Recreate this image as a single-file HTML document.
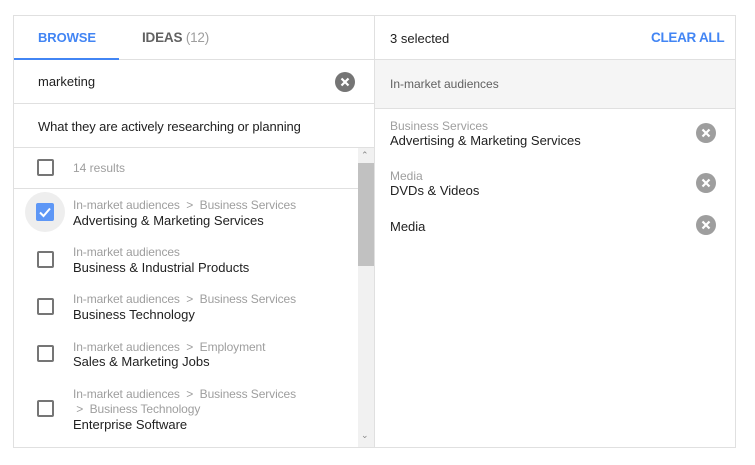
<!DOCTYPE html>
<html><head><style>
*{margin:0;padding:0;box-sizing:border-box}
body{width:755px;height:465px;background:#fff;font-family:"Liberation Sans",Roboto,sans-serif;position:relative;overflow:hidden;color:#212121}
.a{position:absolute}
.hl{position:absolute;height:1px;background:#e0e0e0}
.cb{position:absolute;left:37px;width:17px;height:17px;border:2px solid #757575;border-radius:2px}
.crumb{position:absolute;left:73px;font-size:12px;color:#9e9e9e;white-space:nowrap;letter-spacing:-0.1px}
.name{position:absolute;left:73px;font-size:13px;color:#212121;white-space:nowrap}
.x{position:absolute;width:20px;height:20px;border-radius:50%;background:#9e9e9e}
.x svg{position:absolute;left:0;top:0}
</style></head><body>
<div class="a" style="left:13px;top:15px;width:723px;height:433px;border:1px solid #e0e0e0"></div>
<div class="a" style="left:374px;top:15px;width:1px;height:433px;background:#e0e0e0"></div>
<div class="a" style="left:38px;top:30px;font-size:13px;font-weight:bold;color:#4285f4;letter-spacing:-0.1px">BROWSE</div>
<div class="a" style="left:142px;top:30px;font-size:13.5px;font-weight:bold;color:#616161;letter-spacing:-0.2px">IDEAS <span style="font-weight:normal;color:#9e9e9e">(12)</span></div>
<div class="hl" style="left:14px;top:59px;width:360px"></div>
<div class="a" style="left:14px;top:58px;width:105px;height:2px;background:#4285f4"></div>
<div class="a" style="left:38px;top:74px;font-size:13px">marketing</div>
<div class="x" style="left:335px;top:72px;background:#757575"><svg width="20" height="20"><path d="M6.5 6.5L13.5 13.5M13.5 6.5L6.5 13.5" stroke="#fff" stroke-width="2.2"/></svg></div>
<div class="hl" style="left:14px;top:103px;width:360px"></div>
<div class="a" style="left:38px;top:119px;font-size:13px;letter-spacing:-0.1px">What they are actively researching or planning</div>
<div class="hl" style="left:14px;top:147px;width:360px"></div>
<div class="a" style="left:358px;top:148px;width:16px;height:299px;background:#f1f1f1"></div>
<div class="a" style="left:358px;top:163px;width:16px;height:103px;background:#c1c1c1"></div>
<div class="a" style="left:361px;top:150px;font-size:9px;color:#888">&#8963;</div>
<div class="a" style="left:361px;top:430px;font-size:9px;color:#888">&#8964;</div>
<div class="cb" style="top:159px"></div>
<div class="a" style="left:73px;top:161px;font-size:12px;color:#9e9e9e">14 results</div>
<div class="hl" style="left:14px;top:188px;width:344px"></div>
<div class="a" style="left:25px;top:192px;width:40px;height:40px;border-radius:50%;background:#eeeeee"></div>
<div class="a" style="left:36px;top:203px;width:18px;height:18px;background:#5e97f6;border-radius:2px"><svg width="18" height="18"><path d="M4 9.5L7.5 13L14 5.5" stroke="#fff" stroke-width="2" fill="none"/></svg></div>
<div class="crumb" style="top:198px">In-market audiences &nbsp;&gt;&nbsp; Business Services</div>
<div class="name" style="top:213px">Advertising &amp; Marketing Services</div>
<div class="cb" style="top:251px"></div>
<div class="crumb" style="top:245px">In-market audiences</div>
<div class="name" style="top:260px">Business &amp; Industrial Products</div>
<div class="cb" style="top:298px"></div>
<div class="crumb" style="top:292px">In-market audiences &nbsp;&gt;&nbsp; Business Services</div>
<div class="name" style="top:307px">Business Technology</div>
<div class="cb" style="top:345px"></div>
<div class="crumb" style="top:340px">In-market audiences &nbsp;&gt;&nbsp; Employment</div>
<div class="name" style="top:354px">Sales &amp; Marketing Jobs</div>
<div class="cb" style="top:400px"></div>
<div class="crumb" style="top:387px">In-market audiences &nbsp;&gt;&nbsp; Business Services</div>
<div class="crumb" style="top:402px">&nbsp;&gt;&nbsp; Business Technology</div>
<div class="name" style="top:417px">Enterprise Software</div>
<div class="a" style="left:390px;top:31px;font-size:13px">3 selected</div>
<div class="a" style="left:651px;top:30px;font-size:13.5px;font-weight:bold;color:#4285f4;letter-spacing:-0.3px">CLEAR ALL</div>
<div class="a" style="left:375px;top:59px;width:360px;height:50px;background:#f5f5f5;border-top:1px solid #e0e0e0;border-bottom:1px solid #e0e0e0"></div>
<div class="a" style="left:390px;top:77px;font-size:12px;color:#616161">In-market audiences</div>
<div class="a" style="left:390px;top:119px;font-size:12px;color:#9e9e9e">Business Services</div>
<div class="a" style="left:390px;top:133px;font-size:13px">Advertising &amp; Marketing Services</div>
<div class="x" style="left:696px;top:123px"><svg width="20" height="20"><path d="M6.5 6.5L13.5 13.5M13.5 6.5L6.5 13.5" stroke="#fff" stroke-width="2.2"/></svg></div>
<div class="a" style="left:390px;top:169px;font-size:12px;color:#9e9e9e">Media</div>
<div class="a" style="left:390px;top:183px;font-size:13px">DVDs &amp; Videos</div>
<div class="x" style="left:696px;top:173px"><svg width="20" height="20"><path d="M6.5 6.5L13.5 13.5M13.5 6.5L6.5 13.5" stroke="#fff" stroke-width="2.2"/></svg></div>
<div class="a" style="left:390px;top:219px;font-size:13px">Media</div>
<div class="x" style="left:696px;top:215px"><svg width="20" height="20"><path d="M6.5 6.5L13.5 13.5M13.5 6.5L6.5 13.5" stroke="#fff" stroke-width="2.2"/></svg></div>
</body></html>
